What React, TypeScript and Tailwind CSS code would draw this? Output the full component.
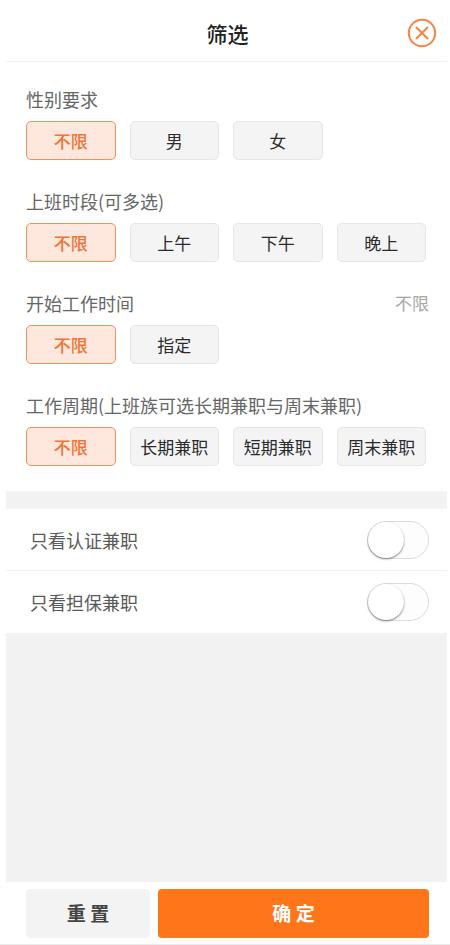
import { useState } from "react";

type Group = {
  title: string;
  options: string[];
  multiple?: boolean;
  showValue?: boolean;
};

const groups: Group[] = [
  { title: "性别要求", options: ["不限", "男", "女"] },
  { title: "上班时段(可多选)", options: ["不限", "上午", "下午", "晚上"], multiple: true },
  { title: "开始工作时间", options: ["不限", "指定"], showValue: true },
  {
    title: "工作周期(上班族可选长期兼职与周末兼职)",
    options: ["不限", "长期兼职", "短期兼职", "周末兼职"],
  },
];

const initial = groups.map(() => [0]);

function OptionGroup({
  group,
  selected,
  onToggle,
}: {
  group: Group;
  selected: number[];
  onToggle: (index: number) => void;
}) {
  return (
    <section aria-label={group.title}>
      <div className="flex h-6 items-center justify-between">
        <h2 className="text-lg leading-6 text-[#666]">{group.title}</h2>
        {group.showValue && (
          <span className="text-[17px] leading-6 text-[#a6a6a6]">{group.options[selected[0]]}</span>
        )}
      </div>
      <div className="mt-2.5 grid grid-cols-4 gap-3.5 pr-[3px]">
        {group.options.map((option, i) => (
          <button
            key={option}
            type="button"
            aria-pressed={selected.includes(i)}
            onClick={() => onToggle(i)}
            className={
              selected.includes(i)
                ? "h-[39px] rounded-[5px] border border-[#f0925f] bg-[#fee8de] text-[17px] font-medium whitespace-nowrap text-[#ee7435]"
                : "h-[39px] rounded-[5px] border border-[#e6e6e6] bg-[#f4f4f4] text-[17px] whitespace-nowrap text-[#2b2b2b]"
            }
          >
            {option}
          </button>
        ))}
      </div>
    </section>
  );
}

function SwitchRow({ label }: { label: string }) {
  return (
    <label className="flex h-[62px] items-center justify-between pr-[18px] pl-6 text-lg text-[#595959]">
      {label}
      <input
        type="checkbox"
        role="switch"
        className="flex h-[38px] w-[62px] appearance-none items-center rounded-full border border-[#dcdcdc] bg-[#fdfdfd] before:size-9 before:rounded-full before:bg-white before:shadow-[0_1px_2px_#777] checked:justify-end checked:bg-[#ff7519]"
      />
    </label>
  );
}

export default function App() {
  const [selection, setSelection] = useState<number[][]>(initial);

  const toggle = (g: number, i: number) =>
    setSelection((prev) =>
      prev.map((current, index) => {
        if (index !== g) return current;
        if (!groups[g].multiple || i === 0) return [i];
        const rest = current.filter((n) => n !== 0 && n !== i);
        const next = current.includes(i) ? rest : [...rest, i];
        return next.length ? next : [0];
      }),
    );

  return (
    <div className="flex min-h-screen flex-col border-b border-[#ebebeb] bg-white pr-[3px] pl-1.5 font-['Noto_Sans_CJK_SC',sans-serif]">
      <header className="grid h-[62px] grid-cols-[1fr_auto_1fr] items-center border-b border-[#f0f0f0] pt-1 pr-2.5">
        <h1 className="col-start-2 pl-3 text-[21px] leading-7 font-medium text-[#222]">筛选</h1>
        <button type="button" aria-label="关闭" className="justify-self-end">
          <svg viewBox="0 0 30 30" className="block size-[30px]" fill="none" stroke="#f5853f" strokeWidth="2">
            <circle cx="15" cy="15" r="13.2" />
            <path d="M9.5 9.5 20.5 20.5M20.5 9.5 9.5 20.5" strokeLinecap="round" />
          </svg>
        </button>
      </header>

      <main className="flex grow flex-col">
        <div className="flex flex-col gap-[29px] pt-[25px] pr-[18px] pb-[25px] pl-5">
          {groups.map((group, g) => (
            <OptionGroup
              key={group.title}
              group={group}
              selected={selection[g]}
              onToggle={(i) => toggle(g, i)}
            />
          ))}
        </div>
        <div className="h-[18px] bg-[#f2f2f2]" />
        <div className="divide-y divide-[#f0f0f0]">
          <SwitchRow label="只看认证兼职" />
          <SwitchRow label="只看担保兼职" />
        </div>
        <div className="grow bg-[#f2f2f2]" />
      </main>

      <footer className="flex gap-2 pt-[7px] pr-[18px] pb-1.5 pl-5 text-[19px] font-bold">
        <button
          type="button"
          onClick={() => setSelection(initial)}
          className="h-[49px] w-[124px] rounded-sm bg-[#f3f3f3] text-[#444]"
        >
          重 置
        </button>
        <button type="button" className="h-[49px] grow rounded-sm bg-[#ff7519] text-white">
          确 定
        </button>
      </footer>
    </div>
  );
}
